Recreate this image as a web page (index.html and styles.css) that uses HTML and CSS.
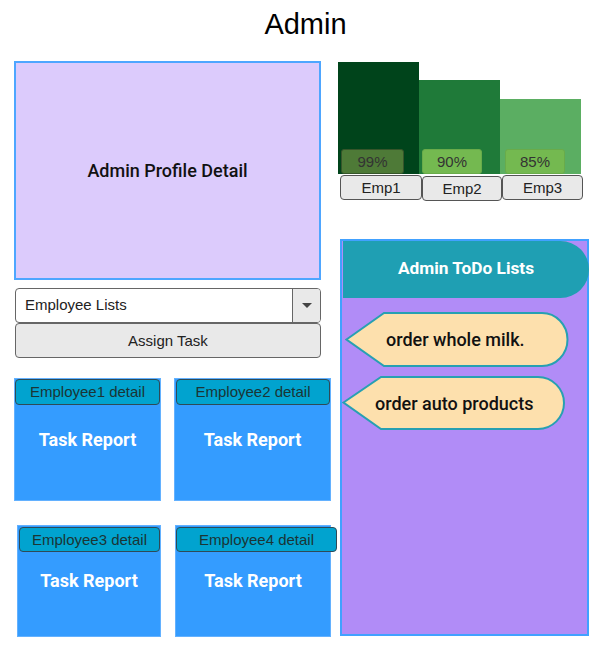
FILE: index.html
```html
<!DOCTYPE html>
<html>
<head>
<meta charset="utf-8">
<link rel="stylesheet" href="styles.css">
</head>
<body>
<h1 class="title">Admin</h1>
<div class="main">
  <div class="left">
    <div class="profile">Admin Profile Detail</div>
    <div class="select">
      <span class="select-text">Employee Lists</span>
      <span class="select-arrow"><span class="caret"></span></span>
    </div>
    <div class="assign">Assign Task</div>
    <div class="cards">
      <div class="card card1">
        <div class="card-head">Employee1 detail</div>
        <div class="card-title">Task Report</div>
      </div>
      <div class="card card2">
        <div class="card-head">Employee2 detail</div>
        <div class="card-title">Task Report</div>
      </div>
      <div class="card card3">
        <div class="card-head">Employee3 detail</div>
        <div class="card-title">Task Report</div>
      </div>
      <div class="card card4">
        <div class="card-head">Employee4 detail</div>
        <div class="card-title">Task Report</div>
      </div>
    </div>
  </div>
  <div class="right">
    <div class="chart">
      <div class="bars">
        <div class="bar-col"><div class="bar bar1" style="height:112px"><span class="pct pct-dark">99%</span></div></div>
        <div class="bar-col"><div class="bar bar2" style="height:94px"><span class="pct">90%</span></div></div>
        <div class="bar-col"><div class="bar bar3" style="height:75px"><span class="pct pct3">85%</span></div></div>
      </div>
      <div class="emps">
        <div class="emp emp1">Emp1</div>
        <div class="emp emp2">Emp2</div>
        <div class="emp emp3">Emp3</div>
      </div>
    </div>
    <div class="todo">
      <div class="todo-head">Admin ToDo Lists</div>
      <div class="todo-item item1">
        <svg class="todo-shape" width="224" height="55" viewBox="0 0 224 55"><path d="M1.5,27.5 L39,1 H197 A25.5,26.5 0 0 1 197,54 H39 Z" fill="#fde0ad" stroke="#27a0b2" stroke-width="2"/></svg>
        <span class="todo-text">order whole milk.</span>
      </div>
      <div class="todo-item item2">
        <svg class="todo-shape" width="224" height="54" viewBox="0 0 224 54"><path d="M1.5,26.5 L39,1 H196 A26,26 0 0 1 196,53 H39 Z" fill="#fde0ad" stroke="#27a0b2" stroke-width="2"/></svg>
        <span class="todo-text">order auto products</span>
      </div>
    </div>
  </div>
</div>
</body>
</html>
```

FILE: styles.css
```css
* { box-sizing: border-box; }
html, body { margin: 0; padding: 0; background: #fff; }
body { width: 592px; font-family: "Liberation Sans", Arial, sans-serif; color: #222; }

.title {
  margin: 0;
  padding: 8px 0 0 19px;
  font-family: "Liberation Sans", Arial, sans-serif;
  font-weight: 400;
  font-size: 29px;
  line-height: 33px;
  text-align: center;
  color: #000;
}

.main {
  display: flex;
  align-items: flex-start;
  margin-top: 20px;
  padding-left: 14px;
}

.left { width: 317px; display: flex; flex-direction: column; }

.profile {
  width: 307px;
  height: 219px;
  background: #dccbfc;
  border: 2px solid #4ea6ff;
  display: flex;
  align-items: center;
  justify-content: center;
  font-family: Roboto, "Noto Sans", sans-serif;
  font-weight: 500;
  font-size: 18px;
  color: #111;
}

.select {
  margin: 8px 0 0 1px;
  width: 306px;
  height: 35px;
  display: flex;
  background: #fff;
  border: 1px solid #666;
  border-radius: 4px;
  overflow: hidden;
}
.select-text {
  flex: 1;
  padding-left: 9px;
  font-size: 15px;
  line-height: 32px;
  color: #222;
}
.select-arrow {
  width: 28px;
  background: #e9e9e9;
  border-left: 1px solid #666;
  display: flex;
  align-items: center;
  justify-content: center;
}
.caret {
  width: 0;
  height: 0;
  border-left: 5px solid transparent;
  border-right: 5px solid transparent;
  border-top: 5px solid #444;
}

.assign {
  margin-left: 1px;
  width: 306px;
  height: 35px;
  background: #e9e9e9;
  border: 1px solid #666;
  border-radius: 4px;
  text-align: center;
  font-size: 15px;
  line-height: 33px;
  color: #222;
}

.cards {
  margin-top: 20px;
  display: grid;
  grid-template-columns: 147px 157px;
  grid-template-rows: 123px 112px;
  column-gap: 13px;
  row-gap: 24px;
}
.card {
  background: #349cff;
  border: 1px solid #63b1ff;
  display: flex;
  flex-direction: column;
}
.card3 { margin-left: 3px; }
.card4 { margin-left: 1px; }
.card-head {
  height: 26px;
  background: #01a3cf;
  border: 1px solid #2e4a57;
  border-radius: 4px;
  text-align: center;
  font-size: 15px;
  line-height: 24px;
  color: #1b3535;
  white-space: nowrap;
}
.card2 .card-head { margin-left: 1px; }
.card3 .card-head { margin: 1px 0 0 1px; height: 25px; line-height: 23px; }
.card4 .card-head { margin: 1px 0 0 0; width: 161px; height: 25px; line-height: 23px; }
.card-title {
  margin-top: 24px;
  text-align: center;
  font-family: Roboto, "Noto Sans", sans-serif;
  font-weight: 700;
  font-size: 18px;
  line-height: 21px;
  color: #fff;
}
.card3 .card-title, .card4 .card-title { margin-top: 18px; }

.right { margin-left: 7px; width: 251px; display: flex; flex-direction: column; }

.chart { display: flex; flex-direction: column; }
.bars {
  height: 113px;
  display: flex;
  align-items: flex-end;
}
.bar-col { width: 81px; }
.bar {
  display: flex;
  align-items: flex-end;
  padding-left: 3px;
}
.bar1 { background: #00441b; }
.bar2 { background: #1f7a39; }
.bar3 { background: #5bae62; }
.pct {
  width: 60px;
  height: 25px;
  background: #74b950;
  border: 1px solid #69ab4a;
  border-radius: 3px;
  text-align: center;
  font-size: 15px;
  line-height: 23px;
  color: #333;
}
.pct-dark { width: 63px; background: #4e7a37; border-color: #36552a; }
.pct3 { margin-left: 2px; }

.emps { display: flex; margin: 1px 0 0 2px; }
.emp {
  height: 25px;
  background: #e9e9e9;
  border: 1px solid #555;
  border-radius: 4px;
  text-align: center;
  font-size: 15px;
  line-height: 23px;
  color: #222;
}
.emp1 { width: 82px; }
.emp2 { width: 80px; margin-top: 1px; }
.emp3 { width: 81px; }

.todo {
  margin: 38px 0 0 2px;
  width: 249px;
  height: 397px;
  background: #b18cf7;
  border: 2px solid #41a1ff;
}
.todo-head {
  margin-left: 1px;
  width: 246px;
  height: 57px;
  padding-bottom: 3px;
  background: #1f9fb3;
  border-radius: 0 29px 29px 0;
  display: flex;
  align-items: center;
  justify-content: center;
  font-family: Roboto, "Noto Sans", sans-serif;
  font-weight: 700;
  font-size: 17.3px;
  color: #fff;
}
.todo-item {
  display: grid;
  width: 224px;
}
.todo-item > * { grid-area: 1 / 1; }
.item1 { height: 55px; margin: 14px 0 0 3px; }
.item2 { height: 54px; margin: 9px 0 0 0; }
.todo-shape { display: block; }
.todo-text {
  align-self: center;
  font-family: Roboto, "Noto Sans", sans-serif;
  font-weight: 500;
  font-size: 18px;
  line-height: 21px;
  color: #111;
}
.item1 .todo-text { padding-left: 41px; }
.item2 .todo-text { padding-left: 33px; }
```
